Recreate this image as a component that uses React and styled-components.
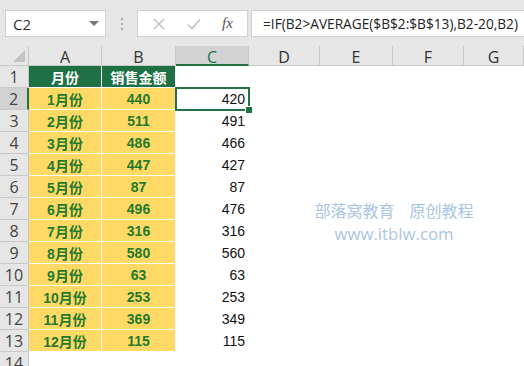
import React from "react";
import styled, { createGlobalStyle } from "styled-components";

const GlobalStyle = createGlobalStyle`
  html, body {
    margin: 0;
    padding: 0;
    background: #fff;
  }
`;

const Page = styled.div`
  position: relative;
  width: 524px;
  height: 366px;
  overflow: hidden;
  font-family: "Liberation Sans", "Noto Sans CJK SC", sans-serif;
  background: #fff;
`;

const Toolbar = styled.div`
  height: 46px;
  background: #e6e6e6;
  display: flex;
  align-items: flex-start;
  padding-top: 10px;
  box-sizing: border-box;
`;

const NameBox = styled.div`
  margin-left: 5px;
  width: 101px;
  height: 27px;
  background: #fff;
  border: 1px solid #d0d0d0;
  box-sizing: border-box;
  display: flex;
  align-items: center;
  justify-content: space-between;
  padding: 0 6px 0 7px;
  font-family: "Open Sans", sans-serif;
  font-size: 15px;
  color: #333;
`;

const Caret = styled.span`
  width: 0;
  height: 0;
  border-left: 5px solid transparent;
  border-right: 5px solid transparent;
  border-top: 5px solid #777;
`;

const Grip = styled.div`
  width: 31px;
  height: 27px;
  display: flex;
  flex-direction: column;
  align-items: center;
  justify-content: center;
  gap: 3px;

  span {
    width: 2px;
    height: 2px;
    background: #aaa;
  }
`;

const IconBox = styled.div`
  width: 111px;
  height: 27px;
  background: #fff;
  border: 1px solid #d0d0d0;
  box-sizing: border-box;
  display: flex;
  align-items: center;
  justify-content: space-around;
  padding: 0 4px;
`;

const Fx = styled.span`
  font-family: "Liberation Serif", serif;
  font-style: italic;
  font-size: 15px;
  color: #555;
`;

const FormulaBar = styled.div`
  margin-left: 3px;
  flex: 1;
  height: 27px;
  background: #fff;
  border: 1px solid #d0d0d0;
  border-right: none;
  box-sizing: border-box;
  display: flex;
  align-items: center;
  padding-left: 11px;
  font-family: "Open Sans", sans-serif;
  font-size: 13.7px;
  color: #222;
  white-space: nowrap;
`;

const Sheet = styled.div`
  display: grid;
  grid-template-columns: 29px 73px 74px 73px 71px 73px 71px 1fr;
  grid-auto-rows: 22px;
  grid-template-rows: 20px;
`;

const Corner = styled.div`
  position: relative;
  background: #e6e6e6;
  border-right: 1px solid #c8c8c8;
  border-bottom: 1px solid #c8c8c8;
  box-sizing: border-box;

  &::after {
    content: "";
    position: absolute;
    right: 3px;
    bottom: 3px;
    border-left: 12px solid transparent;
    border-bottom: 12px solid #c4c4c4;
  }
`;

const ColHead = styled.div`
  background: ${(p) => (p.$active ? "#d2d2d2" : "#e6e6e6")};
  border-right: 1px solid #c8c8c8;
  border-bottom: ${(p) => (p.$active ? "2px solid #217346" : "1px solid #c8c8c8")};
  box-sizing: border-box;
  display: flex;
  align-items: center;
  justify-content: center;
  font-family: "Open Sans", sans-serif;
  font-size: 16px;
  color: ${(p) => (p.$active ? "#217346" : "#333")};
  padding-top: 3px;
`;

const RowHead = styled.div`
  background: ${(p) => (p.$active ? "#d2d2d2" : "#e6e6e6")};
  border-bottom: 1px solid #c8c8c8;
  border-right: ${(p) => (p.$active ? "2px solid #217346" : "1px solid #c8c8c8")};
  box-sizing: border-box;
  display: flex;
  align-items: center;
  justify-content: center;
  font-family: "Open Sans", sans-serif;
  font-size: 16px;
  color: #444;
`;

const Cell = styled.div`
  box-sizing: border-box;
  display: flex;
  align-items: center;
  justify-content: ${(p) => (p.$right ? "flex-end" : "center")};
  padding-right: ${(p) => (p.$right ? "4px" : "0")};
  font-size: 14px;
  white-space: nowrap;
  background: ${(p) => p.$bg || "#fff"};
  color: ${(p) => p.$color || "#111"};
  font-weight: ${(p) => (p.$bold ? 700 : 400)};
  border-right: ${(p) => (p.$bg ? "1px solid #fff" : "none")};
  border-bottom: ${(p) => (p.$bg ? "1px solid #fff" : "none")};
`;

const Selected = styled(Cell)`
  position: relative;
  outline: 2px solid #217346;
  outline-offset: -1px;

  &::after {
    content: "";
    position: absolute;
    right: -4px;
    bottom: -4px;
    width: 6px;
    height: 6px;
    background: #217346;
    border: 1px solid #fff;
  }
`;

const Watermark = styled.div`
  position: absolute;
  left: 304px;
  top: 200px;
  width: 180px;
  display: flex;
  flex-direction: column;
  align-items: center;
  gap: 4px;
  font-family: "Noto Sans CJK SC", "Open Sans", sans-serif;
  font-size: 16px;
  line-height: 20px;
  color: #a9c5e3;
  white-space: pre;
`;

const Slogan = styled.div`
  display: flex;
  gap: 15px;
`;

const Url = styled.span`
  font-family: "Open Sans", sans-serif;
  font-size: 16.8px;
`;

const data = [
  ["1月份", 440, 420],
  ["2月份", 511, 491],
  ["3月份", 486, 466],
  ["4月份", 447, 427],
  ["5月份", 87, 87],
  ["6月份", 496, 476],
  ["7月份", 316, 316],
  ["8月份", 580, 560],
  ["9月份", 63, 63],
  ["10月份", 253, 253],
  ["11月份", 369, 349],
  ["12月份", 115, 115],
];

const cols = ["A", "B", "C", "D", "E", "F", "G"];
const GREEN = "#1e7145";
const YELLOW = "#ffd966";
const TEXT_GREEN = "#1f7a2e";

const Blanks = ({ n, row }) =>
  Array.from({ length: n }, (_, i) => <Cell key={row + "-b" + i} />);

const App = () => {
  return (
    <Page>
      <GlobalStyle />
      <Toolbar>
        <NameBox>
          C2
          <Caret />
        </NameBox>
        <Grip>
          <span />
          <span />
          <span />
        </Grip>
        <IconBox>
          <svg width="14" height="14" viewBox="0 0 14 14">
            <path d="M2 2 L12 12 M12 2 L2 12" stroke="#c2c2c2" strokeWidth="1.6" />
          </svg>
          <svg width="16" height="14" viewBox="0 0 16 14">
            <path d="M2 7.5 L6 11.5 L14 2.5" stroke="#c2c2c2" strokeWidth="1.6" fill="none" />
          </svg>
          <Fx>fx</Fx>
        </IconBox>
        <FormulaBar>=IF(B2&gt;AVERAGE($B$2:$B$13),B2-20,B2)</FormulaBar>
      </Toolbar>

      <Sheet>
        <Corner />
        {cols.map((c) => (
          <ColHead key={c} $active={c === "C"}>
            {c}
          </ColHead>
        ))}

        <RowHead>1</RowHead>
        <Cell $bg={GREEN} $color="#fff" $bold>月份</Cell>
        <Cell $bg={GREEN} $color="#fff" $bold>销售金额</Cell>
        <Blanks n={5} row={1} />

        {data.map(([m, v, r], i) => (
          <React.Fragment key={m}>
            <RowHead $active={i === 0}>{i + 2}</RowHead>
            <Cell $bg={YELLOW} $color={TEXT_GREEN} $bold>{m}</Cell>
            <Cell $bg={YELLOW} $color={TEXT_GREEN} $bold>{v}</Cell>
            {i === 0 ? <Selected $right>{r}</Selected> : <Cell $right>{r}</Cell>}
            <Blanks n={4} row={i + 2} />
          </React.Fragment>
        ))}

        <RowHead>14</RowHead>
        <Blanks n={7} row={14} />
      </Sheet>

      <Watermark>
        <Slogan>
          <span>部落窝教育</span>
          <span>原创教程</span>
        </Slogan>
        <Url>www.itblw.com</Url>
      </Watermark>
    </Page>
  );
};

export default App;
